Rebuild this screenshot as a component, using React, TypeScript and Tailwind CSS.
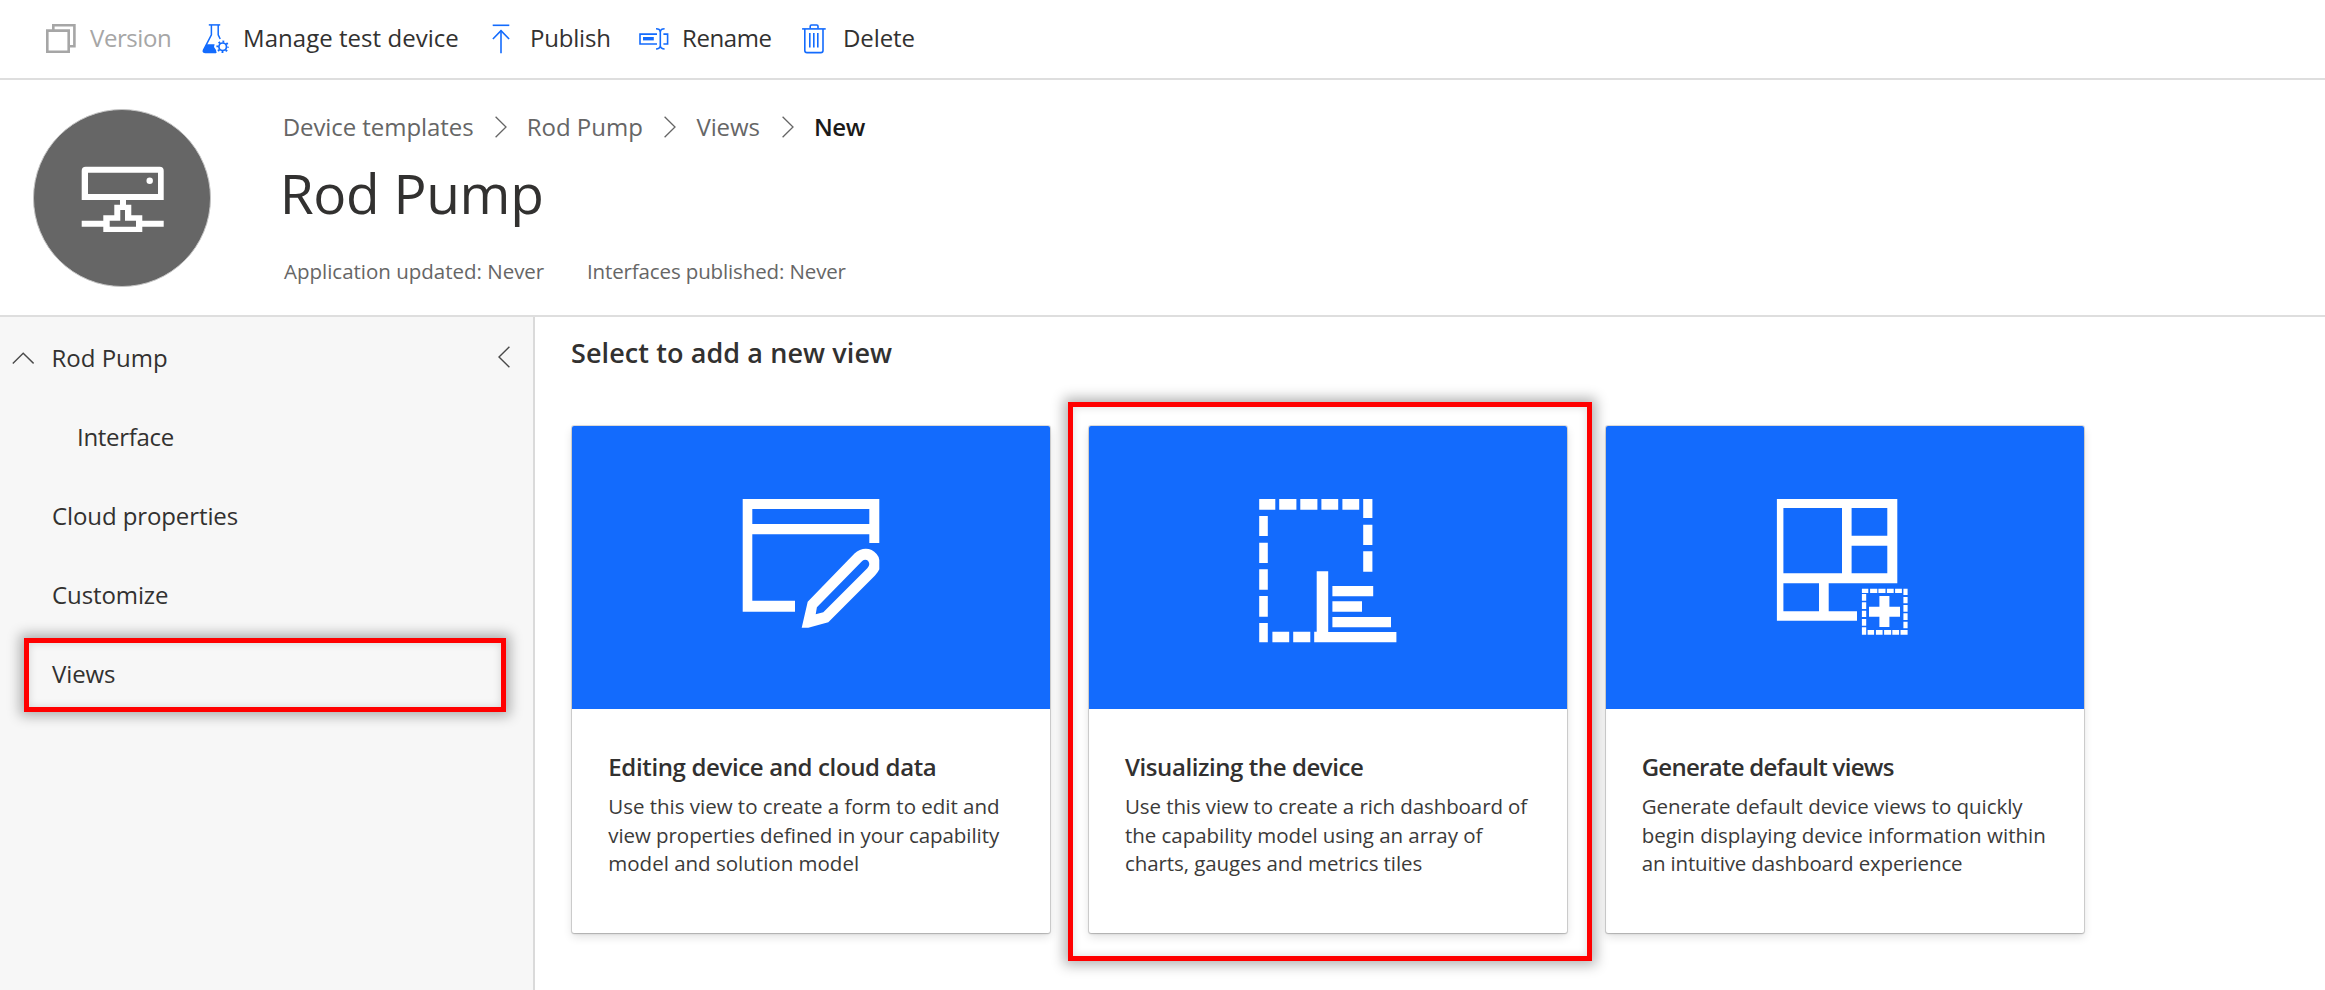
import type { ReactNode } from "react";

const BLUE = "#136bfd";

function VersionIcon() {
  return (
    <svg width="30" height="29" viewBox="46 24 30 29" fill="none" stroke="#a6a6a6" strokeWidth="2.6">
      <path d="M47.3 30.6H68.7V51.7H47.3Z" />
      <path d="M53.3 30V25.3H74.4V46.3H69.5" />
    </svg>
  );
}

function FlaskIcon() {
  return (
    <svg width="28" height="30" viewBox="202 24 28 30" fill="none" stroke={BLUE} strokeWidth="1.5">
      <path d="M208.8 24.9H220.2" />
      <path d="M211.4 25V34.8L203.4 50.4Q202.8 52.4 205 52.4H216" />
      <path d="M218.2 25V34.8L220.2 39" />
      <path d="M206.4 44.3H214.6L214 47L216 50L216.6 53H204.6Q202.4 52.6 203 50.6Z" fill={BLUE} stroke="none" />
      <circle cx="222.7" cy="46.8" r="3.8" strokeWidth="1.7" />
      <circle cx="222.7" cy="46.8" r="5.3" strokeWidth="2" strokeDasharray="1.8 2.363" strokeDashoffset="0.9" />
    </svg>
  );
}

function PublishIcon() {
  return (
    <svg width="18" height="30" viewBox="492 24 18 30" fill="none" stroke={BLUE} strokeWidth="1.6">
      <path d="M492.7 25.3H509.3" />
      <path d="M501 53.3V30.4" />
      <path d="M492.9 39L501 30.6L509.1 39" />
    </svg>
  );
}

function RenameIcon() {
  return (
    <svg width="30" height="22" viewBox="639 28 30 22" fill="none" stroke={BLUE} strokeWidth="1.6">
      <path d="M657 34.1H640V44H657" />
      <path d="M643 37H653.8V40.4H643Z" fill={BLUE} stroke="none" />
      <path d="M660.3 31V46.6" />
      <path d="M656 28.8Q659.8 28.8 660.3 31.6Q660.8 28.8 664.6 28.8" />
      <path d="M656 49Q659.8 49 660.3 46.2Q660.8 49 664.6 49" />
      <path d="M663.4 34.1H667.6V44H663.4" />
    </svg>
  );
}

function DeleteIcon() {
  return (
    <svg width="24" height="30" viewBox="802 24 24 30" fill="none" stroke={BLUE} strokeWidth="1.6">
      <path d="M802.1 28.9H825.7" />
      <path d="M810.2 28.5V26.2Q810.2 25 811.4 25H816.8Q818 25 818 26.2V28.5" />
      <path d="M804.8 29V50.4Q804.8 52.6 807 52.6H820.8Q823 52.6 823 50.4V29" />
      <path d="M809.8 33V47.6M813.8 33V47.6M817.8 33V47.6" />
    </svg>
  );
}

function Chevron() {
  return (
    <svg className="shrink-0" width="12" height="22" viewBox="0 0 12 22" fill="none" stroke="#666666" strokeWidth="1.3">
      <path d="M0.6 0.8L11 11L0.6 21.2" />
    </svg>
  );
}

function DeviceIcon() {
  return (
    <svg width="90" height="73" viewBox="78 163 90 73" fill="#ffffff">
      <path
        fillRule="evenodd"
        d="M85.7 166.7H159.7Q163.7 166.7 163.7 170.7V200H126V204.7H131.3V215.3H142.3V220.7H163.7V226.7H142.3V232H103.3V226.7H81.7V220.7H103.3V215.3H114.3V204.7H120V200H81.7V170.7Q81.7 166.7 85.7 166.7ZM88 172.7V194H158V172.7ZM120.3 210V220.7H109.7V226.7H136V220.7H125V210Z"
      />
      <circle cx="149.7" cy="180.7" r="3.2" />
    </svg>
  );
}

function EditFormIcon() {
  return (
    <svg width="144" height="152" viewBox="0 0 144 152" fill="#ffffff" fillRule="evenodd">
      <path d="M3.7 4H140.3V48H130.3V39.3H13.3V105.7H56V116.7H3.7ZM13.3 14V29H130.3V14Z" />
      <path d="M62.7 132.7L68.7 106.7L115.5 58.6C122 52.2 132 52 137.6 59Q140.3 62 140.3 65V74.3Q139 77.5 136 80.4L89.3 127.3L69.3 132.7ZM76.7 119.3L84.3 117.3L128.3 73.3Q130.3 71 130.3 69C130 65 126 63.6 123.2 66.1L77.9 112.3Z" />
    </svg>
  );
}

function DashboardIcon() {
  return (
    <svg width="144" height="152" viewBox="0 0 144 152" fill="#ffffff">
      <path d="M3.2 4H19.3V14.7H3.2ZM23.2 4H40.4V14.7H23.2ZM44.3 4H61.4V14.7H44.3ZM65.4 4H82.2V14.7H65.4ZM86.4 4H103.2V14.7H86.4Z" />
      <path d="M107.2 4H116.4V23H107.2ZM107.2 29.7H116.4V50H107.2ZM107.2 56.3H116.4V76.7H107.2Z" />
      <path d="M3.2 21H11.8V41H3.2ZM3.2 47.7H11.8V68H3.2ZM3.2 74.3H11.8V94.7H3.2ZM3.2 101H11.8V121.7H3.2ZM3.2 128H11.8V147.3H3.2Z" />
      <path d="M16.4 136.7H33.2V147.3H16.4ZM37.2 136.7H54.3V147.3H37.2Z" />
      <path d="M60.7 76.3H72.2V137H140.4V147.3H58.2V136.7H60.7Z" />
      <path d="M76.4 91H117.2V101.3H76.4ZM76.4 106.3H106V116.7H76.4ZM76.4 122H135V132.3H76.4Z" />
    </svg>
  );
}

function DefaultViewsIcon() {
  return (
    <svg width="144" height="152" viewBox="0 0 144 152" fill="#ffffff" fillRule="evenodd">
      <path d="M3.9 4H124.3V88.3H55.7V116.3H84V125.7H3.9ZM10.4 13V78.3H69V13ZM78.6 13V40.7H114.3V13ZM78.6 50.7V78.3H114.3V50.7ZM10.4 88.3V116.3H46V88.3Z" />
      <path d="M88.9 93.7H95.3V98H88.9ZM97.1 93.7H104.3V98H97.1ZM105.4 93.7H112.5V98H105.4ZM113.9 93.7H120.7V98H113.9ZM122.1 93.7H128.9V98H122.1Z" />
      <path d="M130.4 93.7H134.6V100H130.4ZM130.4 102H134.6V108.3H130.4ZM130.4 110H134.6V116.7H130.4ZM130.4 118.3H134.6V125H130.4ZM130.4 126.7H134.6V133.3H130.4Z" />
      <path d="M94.6 135H101.1V139.7H94.6ZM102.9 135H109.6V139.7H102.9ZM111.1 135H118.2V139.7H111.1ZM119.3 135H126.1V139.7H119.3ZM127.5 135H134.6V139.7H127.5Z" />
      <path d="M88.9 99H93.2V105.7H88.9ZM88.9 107.3H93.2V114H88.9ZM88.9 115.7H93.2V122H88.9ZM88.9 124H93.2V130.7H88.9ZM88.9 132.3H93.2V139.7H88.9Z" />
      <path d="M106.4 101H116.4V111.7H127V121.7H116.4V132H106.4V121.7H96V111.7H106.4Z" />
    </svg>
  );
}

const commands: { label: string; icon: ReactNode; box: string; text: string }[] = [
  { label: "Version", icon: <VersionIcon />, box: "w-[156px] gap-[14px]", text: "tracking-[-0.42px] text-[#a6a6a6]" },
  { label: "Manage test device", icon: <FlaskIcon />, box: "w-[290px] gap-[13px]", text: "tracking-[0.04px]" },
  { label: "Publish", icon: <PublishIcon />, box: "w-[147px] gap-[20px]", text: "tracking-[-0.2px]" },
  { label: "Rename", icon: <RenameIcon />, box: "w-[163px] gap-[13px]", text: "tracking-[-0.42px]" },
  { label: "Delete", icon: <DeleteIcon />, box: "gap-[17px]", text: "tracking-[-0.1px]" },
];

const navItems = [
  { label: "Interface", style: "pl-[77px] tracking-[-0.3px]" },
  { label: "Cloud properties", style: "pl-[52px] tracking-[-0.1px]" },
  { label: "Customize", style: "pl-[52px] tracking-[-0.1px]" },
  { label: "Views", style: "pl-[52px] tracking-[-0.1px]" },
];

const cards = [
  {
    title: "Editing device and cloud data",
    titleStyle: "tracking-[-0.36px]",
    icon: <EditFormIcon />,
    lines: [
      { text: "Use this view to create a form to edit and", style: "tracking-[-0.02px]" },
      { text: "view properties defined in your capability", style: "tracking-[-0.07px]" },
      { text: "model and solution model", style: "tracking-normal" },
    ],
    highlighted: false,
  },
  {
    title: "Visualizing the device",
    titleStyle: "tracking-[-0.42px]",
    icon: <DashboardIcon />,
    lines: [
      { text: "Use this view to create a rich dashboard of", style: "tracking-[-0.09px]" },
      { text: "the capability model using an array of", style: "tracking-[-0.04px]" },
      { text: "charts, gauges and metrics tiles", style: "tracking-[-0.08px]" },
    ],
    highlighted: true,
  },
  {
    title: "Generate default views",
    titleStyle: "tracking-[-0.72px]",
    icon: <DefaultViewsIcon />,
    lines: [
      { text: "Generate default device views to quickly", style: "tracking-[-0.04px]" },
      { text: "begin displaying device information within", style: "tracking-[0.04px]" },
      { text: "an intuitive dashboard experience", style: "tracking-[-0.15px]" },
    ],
    highlighted: false,
  },
];

function Highlight({ className }: { className: string }) {
  return (
    <div
      className={`pointer-events-none absolute z-10 border-[5px] border-[#ff0000] shadow-[0_0_12px_4px_rgba(0,0,0,0.3),inset_0_0_8px_rgba(0,0,0,0.14)] ${className}`}
    />
  );
}

export default function App() {
  return (
    <div className="flex h-[990px] w-[2325px] flex-col overflow-hidden bg-white font-['Open_Sans','Noto_Sans',sans-serif] text-[24px] whitespace-nowrap text-[#323130]">
      <div className="flex h-[80px] shrink-0 items-center border-b-2 border-[#dedede] pb-px pl-[46px]">
        {commands.map((c) => (
          <button key={c.label} className={`flex items-center ${c.box}`}>
            <span className="shrink-0">{c.icon}</span>
            <span className={`pb-[2px] leading-[32px] ${c.text}`}>{c.label}</span>
          </button>
        ))}
      </div>

      <header className="flex h-[237px] shrink-0 border-b-2 border-[#dedede] pl-[33px]">
        <div className="mt-[28.5px] flex size-[178px] items-center justify-center rounded-full border border-[#c4c4c4] bg-[#666666] pt-[3px] pl-[2px]">
          <DeviceIcon />
        </div>
        <div className="ml-[71.7px] pt-[31px]">
          <nav className="flex h-[32px] items-center leading-[32px] text-[#666666]">
            <span className="w-[212.3px] tracking-[-0.07px]">Device templates</span>
            <Chevron />
            <span className="ml-[19.7px] w-[137.6px]">Rod Pump</span>
            <Chevron />
            <span className="ml-[20.2px] w-[85.2px] tracking-[-0.1px]">Views</span>
            <Chevron />
            <span className="ml-[20.3px] font-semibold tracking-[-0.45px] text-[#1b1a19]">New</span>
          </nav>
          <h1 className="mt-[15px] -ml-[3px] text-[55px] leading-[70px] tracking-[-0.31px]">Rod Pump</h1>
          <div className="mt-[28px] flex text-[20.5px] leading-[30px] text-[#666666]">
            <span className="ml-[1.3px] w-[303px] tracking-[-0.01px]">Application updated: Never</span>
            <span className="tracking-[-0.13px]">Interfaces published: Never</span>
          </div>
        </div>
      </header>

      <div className="flex min-h-0 flex-1">
        <aside className="relative w-[535px] shrink-0 border-r-2 border-[#dadada] bg-[#f7f7f7] pt-px">
          <div className="flex h-[79px] items-center pl-[12px]">
            <svg width="22" height="12" viewBox="0 0 22 12" fill="none" stroke="#4a4a4a" strokeWidth="1.4">
              <path d="M0.8 11.4L11.2 1.2L21.6 11.4" />
            </svg>
            <span className="ml-[17.5px] w-[446.5px]">Rod Pump</span>
            <svg className="mb-[2px]" width="12" height="22" viewBox="0 0 12 22" fill="none" stroke="#4a4a4a" strokeWidth="1.4">
              <path d="M11.4 0.8L1 11L11.4 21.2" />
            </svg>
          </div>
          {navItems.map((n) => (
            <div key={n.label} className={`flex h-[79px] items-center ${n.style}`}>
              {n.label}
            </div>
          ))}
          <Highlight className="top-[321px] left-[24px] h-[74px] w-[482px]" />
        </aside>

        <main className="flex-1 pt-[16px] pl-[36px]">
          <h2 className="text-[27px] leading-[40px] font-semibold tracking-[0.09px]">Select to add a new view</h2>
          <div className="mt-[53px] ml-[1.3px] flex gap-[38.7px]">
            {cards.map((card) => (
              <section
                key={card.title}
                className="relative h-[507px] w-[478px] rounded-[2px] bg-white shadow-[0_0_0_1px_rgba(0,0,0,0.12),0_1px_2px_rgba(0,0,0,0.16),0_4px_10px_rgba(0,0,0,0.12)]"
              >
                <div className="flex h-[282.5px] justify-center rounded-t-[2px] bg-[#136bfd] pt-[69px]">{card.icon}</div>
                <div className="pt-[41px] pl-[36px]">
                  <h3 className={`leading-[34px] font-semibold ${card.titleStyle}`}>{card.title}</h3>
                  <div className="mt-[8.4px] text-[20.5px] leading-[28.7px] text-[#3b3a39]">
                    {card.lines.map((line) => (
                      <div key={line.text} className={line.style}>
                        {line.text}
                      </div>
                    ))}
                  </div>
                </div>
                {card.highlighted && <Highlight className="-top-[24px] -left-[21px] h-[559px] w-[524px]" />}
              </section>
            ))}
          </div>
        </main>
      </div>
    </div>
  );
}
